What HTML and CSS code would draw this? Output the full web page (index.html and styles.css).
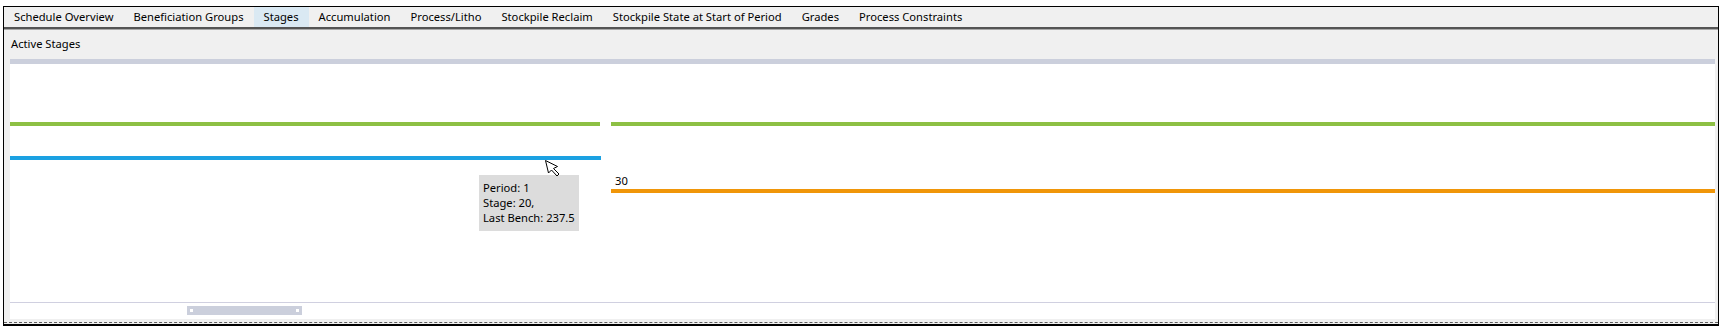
FILE: index.html
```html
<!DOCTYPE html>
<html>
<head>
    <title>Stages</title>
    <link rel="stylesheet" href="styles.css">
</head>
<body>
    <div class="window">
        <div class="tabs">
            <span class="tab">Schedule Overview</span>
            <span class="tab">Beneficiation Groups</span>
            <span class="tab active">Stages</span>
            <span class="tab">Accumulation</span>
            <span class="tab">Process/Litho</span>
            <span class="tab">Stockpile Reclaim</span>
            <span class="tab">Stockpile State at Start of Period</span>
            <span class="tab">Grades</span>
            <span class="tab">Process Constraints</span>
        </div>

        <div class="panel">
            <div class="panel-title">Active Stages</div>
            <div class="chart-frame">
                <div class="chart-top"></div>
                <div class="chart">
                    <!-- stage bars: period 1 on the left, period 2 on the right -->
                    <div class="bar green" style="left: 0; top: 58px; width: 590px;"></div>
                    <div class="bar green" style="left: 601px; top: 58px; right: 0;"></div>
                    <div class="bar blue" style="left: 0; top: 92px; width: 591px;"></div>
                    <div class="bar orange" style="left: 601px; top: 125px; right: 0;"></div>
                    <div class="bar-label" style="left: 605px; top: 109px;">30</div>

                    <div class="tooltip">
                        Period: 1<br>
                        Stage: 20,<br>
                        Last Bench: 237.5
                    </div>

                    <svg class="cursor" width="16" height="18" viewBox="0 0 16 18">
                        <polygon points="0.5,0.5 3.5,13 6.5,10 12,16 14,14 8.5,8.5 12.5,6.5" fill="#fff" stroke="#000" stroke-width="1" stroke-linejoin="miter"/>
                    </svg>
                </div>
                <div class="hscroll">
                    <div class="thumb">
                        <span class="grip"></span>
                        <span class="grip"></span>
                    </div>
                </div>
            </div>
        </div>
        <div class="footer"></div>
    </div>
</body>
</html>
```

FILE: styles.css
```css
body {
    margin: 0;
    background-color: #fff;
    font-family: "Noto Sans", "Open Sans", sans-serif;
    font-size: 11.2px;
    color: #000;
}

.window {
    box-sizing: border-box;
    width: 1716px;
    margin: 6px 0 0 3px;
    border: 1px solid #000;
    border-bottom-width: 2px;
    background-color: #f0f0f0;
}

.tabs {
    display: flex;
    height: 20px;
    border-bottom: 2px solid #545454;
    box-shadow: 0 1px 0 #a8a8a8;
    margin-bottom: 1px;
}

.tab {
    padding: 0 10px;
    line-height: 20px;
    white-space: nowrap;
}

.tab.active {
    background-color: #dae9f3;
}

.panel {
    padding: 0 3px 3px 6px;
}

.panel-title {
    height: 29px;
    line-height: 27px;
    padding-left: 1px;
}

.chart-frame {
    background-color: #fff;
}

.chart-top {
    height: 5px;
    background-color: #cbcfdc;
}

.chart {
    position: relative;
    height: 238px;
    border-bottom: 1px solid #d0d0e0;
}

.bar {
    position: absolute;
    height: 4px;
}

.bar.green {
    background-color: #8dc044;
}

.bar.blue {
    background-color: #1ba1e2;
}

.bar.orange {
    background-color: #f09609;
}

.bar-label {
    position: absolute;
    line-height: 15px;
}

.tooltip {
    position: absolute;
    left: 469px;
    top: 111px;
    padding: 5px 4px 6px 4px;
    line-height: 15px;
    background-color: #dcdcdc;
    white-space: nowrap;
}

.cursor {
    position: absolute;
    left: 535px;
    top: 96px;
}

.hscroll {
    height: 16px;
    padding-top: 3px;
    box-sizing: border-box;
}

.thumb {
    display: flex;
    justify-content: space-between;
    align-items: center;
    width: 115px;
    height: 9px;
    margin-left: 177px;
    padding: 0 3px;
    box-sizing: border-box;
    background-color: #cbcfdc;
}

.grip {
    width: 3px;
    height: 3px;
    background-color: #fff;
}

.footer {
    height: 1px;
    border-top: 1px dashed #606060;
}
```
